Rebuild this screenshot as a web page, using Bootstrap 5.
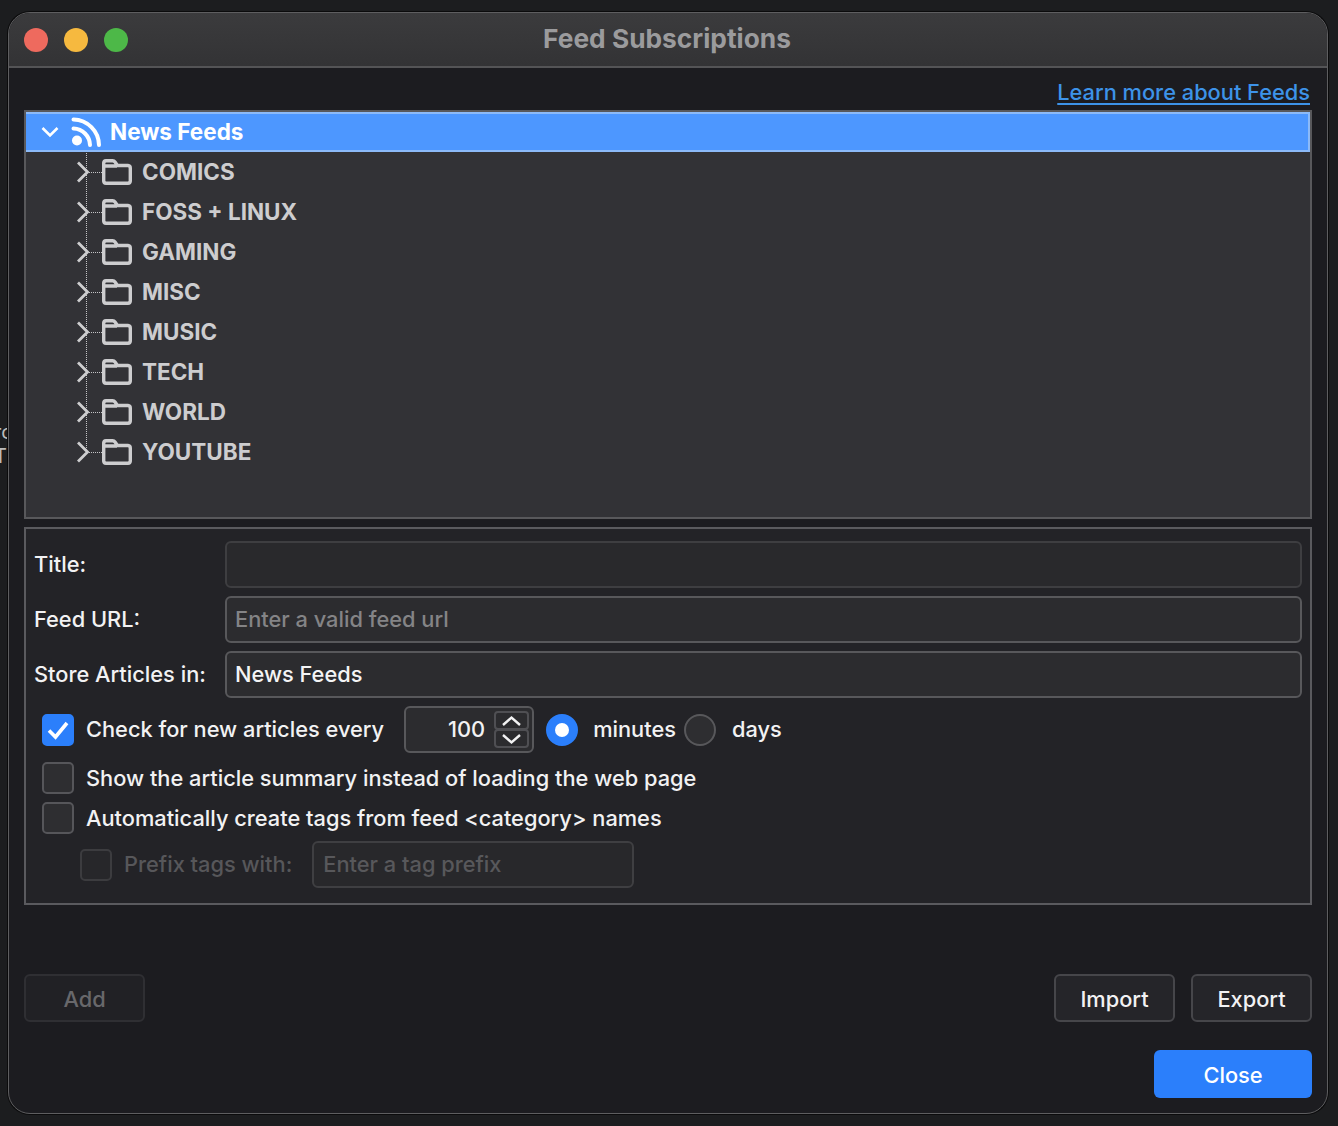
<!DOCTYPE html>
<html lang="en">
<head>
<meta charset="utf-8">
<title>Feed Subscriptions</title>
<link href="https://cdn.jsdelivr.net/npm/bootstrap@5.3.0/dist/css/bootstrap.min.css" rel="stylesheet">
<style>
html,body{height:100%;}
body{background:#1c1d1f;margin:0;overflow:hidden;font-family:Inter,"Liberation Sans",sans-serif;font-size:22px;color:#f2f2f3;position:relative;}
.scrap{position:absolute;left:-6px;color:#bbb;font-size:20px;line-height:24px;}
.win{position:absolute;left:8px;top:12px;width:1320px;height:1102px;border:1.5px solid #5e5e60;border-radius:22px;background:#1c1c20;overflow:hidden;box-shadow:0 0 0 1px #0b0b0c;}
.tbar{height:55px;background:linear-gradient(#3b3b3d,#333335);border-bottom:2px solid #545456;position:relative;}
.lights{gap:16px;padding-left:15px;}
.dotc{width:24px;height:24px;border-radius:50%;}
.ttl{font-weight:700;font-size:26.3px;color:#9b9b9d;margin-top:-1px;margin-left:-1px;}
.body-wrap{padding:0 15px;}
.lnk{color:#3d93e8;font-size:21.8px;font-weight:500;text-decoration:underline;text-underline-offset:3px;text-decoration-thickness:1.5px;line-height:26px;margin-top:11px;margin-bottom:5px;margin-right:2px;}
.tree{height:409px;background:#323236;border:2px solid #58585b;position:relative;}
.sel{height:40px;background:#4d97ff;border:2px solid #8cbaf8;border-left:0;font-weight:700;color:#fff;font-size:22.5px;padding-left:15px;}
.sel-chev{margin-right:12px;flex:none;}
.sel-rss{margin-right:9px;flex:none;}
.node{height:40px;font-weight:700;color:#cdcdcf;font-size:22.5px;padding-left:51px;position:relative;}
.node::before{content:"";position:absolute;left:60px;top:20px;width:16px;border-top:1.5px dotted #c5c5c7;}
.vdots{position:absolute;left:60px;top:41px;height:301px;border-left:1.5px dotted #c5c5c7;}
.chev{width:12px;height:22px;margin-right:13px;position:relative;z-index:1;}
.fold{width:30px;height:26px;margin-right:10px;position:relative;z-index:1;background:#323236;}
.panel{height:378px;margin-top:8px;background:#232327;border:2px solid #5a5a5e;padding:12px 8px 0 8px;font-weight:500;font-size:21.8px;}
.lab{width:191px;flex:none;}
.fld{height:47px;flex:1 1 auto;border:2px solid #58585b;border-radius:6px;background:#2c2c2f;padding:0 8px;color:#f4f4f5;line-height:43px;}
.fld-off{background:#29292c;border-color:#3e3e41;}
.ph{color:#848486;}
.frow{margin-bottom:8px;height:47px;}
.box{width:32px;height:32px;flex:none;border:2px solid #56565a;border-radius:5px;background:#2e2e31;margin-right:12px;}
.box-on{background:#2b7ffb;border-color:#2b7ffb;}
.box-off{background:#27272a;border-color:#3c3c3f;}
.spin{width:130px;height:47px;border:2px solid #58585b;border-radius:6px;background:#2c2c2f;padding-right:3px;margin-left:20px;margin-right:12px;}
.stepper{width:35px;height:37px;margin-left:9px;}
.stepcell{height:19px;border:2px solid #4f4f53;border-radius:4px;background:#2b2b2e;}
.stepcell + .stepcell{margin-top:-1px;}
.rad{width:32px;height:32px;border-radius:50%;flex:none;border:2px solid #58585b;background:#2e2e31;}
.rad-on{background:#2b7ffb;border-color:#2b7ffb;}
.rad-on i{width:14px;height:14px;border-radius:50%;background:#fff;display:block;}
.rlab1{margin-left:15px;margin-right:8px;}
.rlab2{margin-left:16px;}
.muted-t{color:#57575a;}
.tagfld{width:322px;height:47px;flex:none;border:2px solid #3f3f42;border-radius:6px;background:#28282b;color:#58585b;padding:0 9px;line-height:43px;margin-left:20px;}
.chk-row{height:47px;margin-bottom:9px;}
.plain-row{height:32px;}
.plain-row.gapped{margin-bottom:8px;}
.prefix-row{height:47px;margin-top:7px;padding-left:46px;}
.actions{margin-top:69px;}
.actions-r{gap:16px;}
.close-row{margin-top:28px;}
.actbtn{height:48px;width:121px;border:2px solid #46464a;border-radius:6px;background:#252529;color:#f2f2f3;font-size:21.8px;font-weight:500;padding:2px 0 0;}
.actbtn.btn-dim,.actbtn.btn-dim:disabled{border-color:#2f2f33;background:#212125;color:#68686b;opacity:1;}
.btn-close-main{height:48px;width:158px;border-radius:6px;background:#2b7ffb;border:0;color:#fff;font-size:21.8px;font-weight:500;padding:2px 0 0;}
</style>
</head>
<body>
<div class="scrap" style="top:420px">rc<br>T</div>
<div class="win d-flex flex-column">
  <div class="tbar d-flex align-items-center">
    <div class="lights d-flex">
      <span class="dotc" style="background:#ee6a5e"></span>
      <span class="dotc" style="background:#f6b93f"></span>
      <span class="dotc" style="background:#4db848"></span>
    </div>
    <div class="ttl position-absolute top-50 start-50 translate-middle">Feed Subscriptions</div>
  </div>
  <div class="body-wrap flex-grow-1 d-flex flex-column">
    <div class="text-end"><a class="lnk d-inline-block" href="#">Learn more about Feeds</a></div>
    <div class="tree">
      <span class="vdots"></span>
      <div class="sel d-flex align-items-center">
        <svg width="18" height="12" viewBox="0 0 18 12" class="sel-chev"><path d="M1.500 2 9 9.500 16.500 2" fill="none" stroke="#fff" stroke-width="2.600"/></svg>
        <svg width="30" height="30" viewBox="0 0 30 30" class="sel-rss"><circle cx="6" cy="23.500" r="5" fill="#fff"/><path d="M2.500 11.500A17 17 0 0 1 19 28" fill="none" stroke="#fff" stroke-width="4" stroke-linecap="round"/><path d="M2.500 2.500A26 26 0 0 1 28 28" fill="none" stroke="#fff" stroke-width="4" stroke-linecap="round"/></svg>
        <span>News Feeds</span>
      </div>
      <div class="node d-flex align-items-center"><svg class="chev" viewBox="0 0 12 22"><path d="M1 1.500 10.500 11 1 20.500" fill="none" stroke="#cdcdcf" stroke-width="2.800"/></svg><svg class="fold" viewBox="0 0 30 26"><path d="M1.700 22V4A2.500 2.500 0 0 1 4 1.700H10.500A3 3 0 0 1 13 3L15.500 6.500H26A2.500 2.500 0 0 1 28.300 9V22A2.500 2.500 0 0 1 26 24.300H4A2.500 2.500 0 0 1 1.700 22ZM1.700 7H15" fill="none" stroke="#cdcdcf" stroke-width="3.400"/></svg>COMICS</div>
      <div class="node d-flex align-items-center"><svg class="chev" viewBox="0 0 12 22"><path d="M1 1.500 10.500 11 1 20.500" fill="none" stroke="#cdcdcf" stroke-width="2.800"/></svg><svg class="fold" viewBox="0 0 30 26"><path d="M1.700 22V4A2.500 2.500 0 0 1 4 1.700H10.500A3 3 0 0 1 13 3L15.500 6.500H26A2.500 2.500 0 0 1 28.300 9V22A2.500 2.500 0 0 1 26 24.300H4A2.500 2.500 0 0 1 1.700 22ZM1.700 7H15" fill="none" stroke="#cdcdcf" stroke-width="3.400"/></svg>FOSS + LINUX</div>
      <div class="node d-flex align-items-center"><svg class="chev" viewBox="0 0 12 22"><path d="M1 1.500 10.500 11 1 20.500" fill="none" stroke="#cdcdcf" stroke-width="2.800"/></svg><svg class="fold" viewBox="0 0 30 26"><path d="M1.700 22V4A2.500 2.500 0 0 1 4 1.700H10.500A3 3 0 0 1 13 3L15.500 6.500H26A2.500 2.500 0 0 1 28.300 9V22A2.500 2.500 0 0 1 26 24.300H4A2.500 2.500 0 0 1 1.700 22ZM1.700 7H15" fill="none" stroke="#cdcdcf" stroke-width="3.400"/></svg>GAMING</div>
      <div class="node d-flex align-items-center"><svg class="chev" viewBox="0 0 12 22"><path d="M1 1.500 10.500 11 1 20.500" fill="none" stroke="#cdcdcf" stroke-width="2.800"/></svg><svg class="fold" viewBox="0 0 30 26"><path d="M1.700 22V4A2.500 2.500 0 0 1 4 1.700H10.500A3 3 0 0 1 13 3L15.500 6.500H26A2.500 2.500 0 0 1 28.300 9V22A2.500 2.500 0 0 1 26 24.300H4A2.500 2.500 0 0 1 1.700 22ZM1.700 7H15" fill="none" stroke="#cdcdcf" stroke-width="3.400"/></svg>MISC</div>
      <div class="node d-flex align-items-center"><svg class="chev" viewBox="0 0 12 22"><path d="M1 1.500 10.500 11 1 20.500" fill="none" stroke="#cdcdcf" stroke-width="2.800"/></svg><svg class="fold" viewBox="0 0 30 26"><path d="M1.700 22V4A2.500 2.500 0 0 1 4 1.700H10.500A3 3 0 0 1 13 3L15.500 6.500H26A2.500 2.500 0 0 1 28.300 9V22A2.500 2.500 0 0 1 26 24.300H4A2.500 2.500 0 0 1 1.700 22ZM1.700 7H15" fill="none" stroke="#cdcdcf" stroke-width="3.400"/></svg>MUSIC</div>
      <div class="node d-flex align-items-center"><svg class="chev" viewBox="0 0 12 22"><path d="M1 1.500 10.500 11 1 20.500" fill="none" stroke="#cdcdcf" stroke-width="2.800"/></svg><svg class="fold" viewBox="0 0 30 26"><path d="M1.700 22V4A2.500 2.500 0 0 1 4 1.700H10.500A3 3 0 0 1 13 3L15.500 6.500H26A2.500 2.500 0 0 1 28.300 9V22A2.500 2.500 0 0 1 26 24.300H4A2.500 2.500 0 0 1 1.700 22ZM1.700 7H15" fill="none" stroke="#cdcdcf" stroke-width="3.400"/></svg>TECH</div>
      <div class="node d-flex align-items-center"><svg class="chev" viewBox="0 0 12 22"><path d="M1 1.500 10.500 11 1 20.500" fill="none" stroke="#cdcdcf" stroke-width="2.800"/></svg><svg class="fold" viewBox="0 0 30 26"><path d="M1.700 22V4A2.500 2.500 0 0 1 4 1.700H10.500A3 3 0 0 1 13 3L15.500 6.500H26A2.500 2.500 0 0 1 28.300 9V22A2.500 2.500 0 0 1 26 24.300H4A2.500 2.500 0 0 1 1.700 22ZM1.700 7H15" fill="none" stroke="#cdcdcf" stroke-width="3.400"/></svg>WORLD</div>
      <div class="node d-flex align-items-center"><svg class="chev" viewBox="0 0 12 22"><path d="M1 1.500 10.500 11 1 20.500" fill="none" stroke="#cdcdcf" stroke-width="2.800"/></svg><svg class="fold" viewBox="0 0 30 26"><path d="M1.700 22V4A2.500 2.500 0 0 1 4 1.700H10.500A3 3 0 0 1 13 3L15.500 6.500H26A2.500 2.500 0 0 1 28.300 9V22A2.500 2.500 0 0 1 26 24.300H4A2.500 2.500 0 0 1 1.700 22ZM1.700 7H15" fill="none" stroke="#cdcdcf" stroke-width="3.400"/></svg>YOUTUBE</div>
    </div>
    <div class="panel">
      <div class="frow d-flex align-items-center"><span class="lab">Title:</span><div class="fld fld-off"></div></div>
      <div class="frow d-flex align-items-center"><span class="lab">Feed URL:</span><div class="fld ph">Enter a valid feed url</div></div>
      <div class="frow d-flex align-items-center"><span class="lab">Store Articles in:</span><div class="fld">News Feeds</div></div>
      <div class="chk-row d-flex align-items-center ps-2">
        <span class="box box-on d-flex align-items-center justify-content-center"><svg width="24" height="20" viewBox="0 0 24 20"><path d="M3 10.500 9.500 17 21 3" fill="none" stroke="#fff" stroke-width="3.600"/></svg></span>
        <span>Check for new articles every</span>
        <div class="spin d-flex align-items-center justify-content-end">
          <span>100</span>
          <div class="stepper d-flex flex-column">
            <div class="stepcell d-flex align-items-center justify-content-center"><svg width="21" height="12" viewBox="0 0 21 12"><path d="M2 10 10.500 2.500 19 10" fill="none" stroke="#f2f2f3" stroke-width="2.400"/></svg></div>
            <div class="stepcell d-flex align-items-center justify-content-center"><svg width="21" height="12" viewBox="0 0 21 12"><path d="M2 2 10.500 9.500 19 2" fill="none" stroke="#f2f2f3" stroke-width="2.400"/></svg></div>
          </div>
        </div>
        <span class="rad rad-on d-flex align-items-center justify-content-center"><i></i></span>
        <span class="rlab1">minutes</span>
        <span class="rad"></span>
        <span class="rlab2">days</span>
      </div>
      <div class="plain-row gapped d-flex align-items-center ps-2"><span class="box"></span><span>Show the article summary instead of loading the web page</span></div>
      <div class="plain-row d-flex align-items-center ps-2"><span class="box"></span><span>Automatically create tags from feed &lt;category&gt; names</span></div>
      <div class="prefix-row d-flex align-items-center">
        <span class="box box-off"></span><span class="muted-t">Prefix tags with:</span><div class="tagfld">Enter a tag prefix</div>
      </div>
    </div>
    <div class="actions d-flex justify-content-between">
      <button class="btn actbtn btn-dim" disabled>Add</button>
      <div class="actions-r d-flex">
        <button class="btn actbtn">Import</button>
        <button class="btn actbtn">Export</button>
      </div>
    </div>
    <div class="close-row d-flex justify-content-end">
      <button class="btn btn-close-main">Close</button>
    </div>
  </div>
</div>
<script src="https://cdn.jsdelivr.net/npm/bootstrap@5.3.0/dist/js/bootstrap.bundle.min.js"></script>
</body>
</html>
